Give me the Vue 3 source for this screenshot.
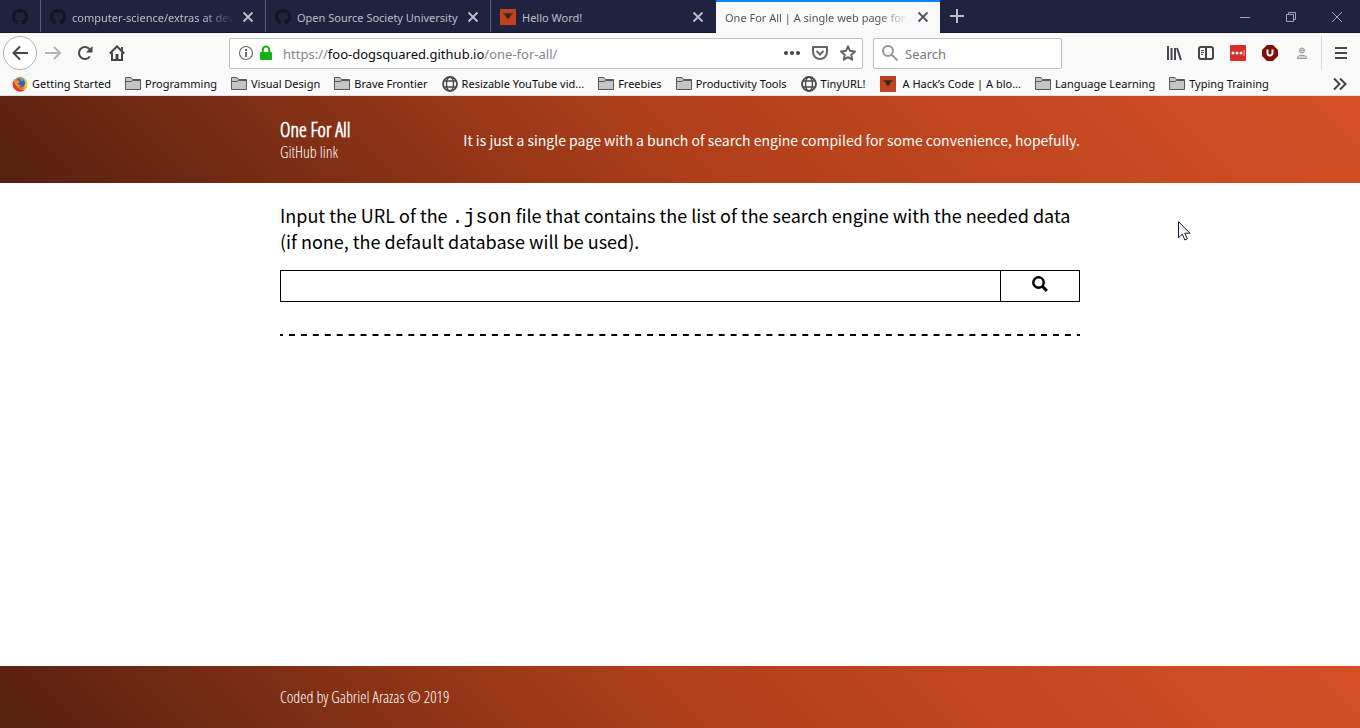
<script setup>
import { ref } from 'vue'

const tabs = [
  { title: 'computer-science/extras at dev', icon: 'github', fade: true },
  { title: 'Open Source Society University', icon: 'github' },
  { title: 'Hello Word!', icon: 'fox' },
  { title: 'One For All | A single web page for r', active: true, fade: true },
]

const bookmarks = [
  { label: 'Getting Started', icon: 'firefox' },
  { label: 'Programming', icon: 'folder' },
  { label: 'Visual Design', icon: 'folder' },
  { label: 'Brave Frontier', icon: 'folder' },
  { label: 'Resizable YouTube vid...', icon: 'globe' },
  { label: 'Freebies', icon: 'folder' },
  { label: 'Productivity Tools', icon: 'folder' },
  { label: 'TinyURL!', icon: 'globe' },
  { label: 'A Hack’s Code | A blo...', icon: 'fox' },
  { label: 'Language Learning', icon: 'folder' },
  { label: 'Typing Training', icon: 'folder' },
]

const databaseUrl = ref('')
const search = ref('')
</script>

<template>
  <div class="window">
    <svg class="defs" width="0" height="0" aria-hidden="true">
      <symbol id="github" viewBox="0 0 16 16">
        <path fill="#14141c" fill-rule="evenodd" d="M8 0C3.58 0 0 3.58 0 8c0 3.54 2.29 6.53 5.47 7.59.4.07.55-.17.55-.38 0-.19-.01-.82-.01-1.49-2.01.37-2.53-.49-2.69-.94-.09-.23-.48-.94-.82-1.13-.28-.15-.68-.52-.01-.53.63-.01 1.08.58 1.23.82.72 1.21 1.87.87 2.33.66.07-.52.28-.87.51-1.07-1.78-.2-3.64-.89-3.64-3.95 0-.87.31-1.59.82-2.15-.08-.2-.36-1.02.08-2.12 0 0 .67-.21 2.2.82.64-.18 1.32-.27 2-.27s1.36.09 2 .27c1.53-1.04 2.2-.82 2.2-.82.44 1.1.16 1.92.08 2.12.51.56.82 1.27.82 2.15 0 3.07-1.87 3.75-3.65 3.95.29.25.54.73.54 1.48 0 1.07-.01 1.93-.01 2.2 0 .21.15.46.55.38A8.01 8.01 0 0 0 16 8c0-4.42-3.58-8-8-8z" />
      </symbol>
      <symbol id="fox" viewBox="0 0 16 16">
        <path fill="#bf431d" d="M0 0h16v16H0z" />
        <path fill="#74301f" d="M3 3.500l3 .7 2-.6 2 .6 3-.7-.3 2L10.500 7H5.500L3.300 5.500z" />
        <path fill="#33262a" d="M5.500 4.500h5L10 8l-1 1.500H7L6 8z" />
      </symbol>
      <symbol id="firefox" viewBox="0 0 16 16">
        <circle cx="8" cy="8.300" r="7.300" fill="#f5761d" />
        <path fill="#ffc52e" d="M11 1.500c3 1.500 4.500 4 4.300 7-.3 3-2.300 5.500-5.300 6.500 2-2 3-4 2.500-7z" />
        <path fill="#e2313a" d="M1 5c-1 4 .5 8.500 4.500 10 2.500 1 5 .5 7-1-4 .5-7-1-8-4z" />
        <circle cx="8.500" cy="6.800" r="4.600" fill="#2463bd" />
        <path fill="#35b4ee" d="M7 2.500c2-1 4 0 5 1.500L10 5.500z" />
        <path fill="#f78a1e" d="M1.200 3l2.500 1.500L6.500 4.300 8 6 6 7.200l.5 1.600L9.500 9.500C8 11.500 5 11.500 3.500 9z" />
      </symbol>
      <symbol id="folder" viewBox="0 0 16 16">
        <path fill="#c3c6c4" stroke="#55595a" d="M.5 13.500v-12H6L7.500 3.500h8v10z" />
        <path fill="none" stroke="#55595a" d="M.5 5.500h5.500l1.500-1h8" />
      </symbol>
      <symbol id="globe" viewBox="0 0 16 16">
        <g fill="none" stroke="#4a4a4f" stroke-width="1.400">
          <circle cx="8" cy="8" r="7" stroke-width="1.800" />
          <ellipse cx="8" cy="8" rx="3.500" ry="7" />
          <path d="M2 5h12M2 11h12" />
        </g>
      </symbol>
    </svg>

    <nav class="tab-strip" aria-label="Tabs">
      <button class="pinned" aria-label="GitHub"><svg width="16" height="16"><use href="#github" /></svg></button>
      <div v-for="tab in tabs" :key="tab.title" class="tab" :class="{ active: tab.active }">
        <svg v-if="tab.icon" width="16" height="16"><use :href="'#' + tab.icon" /></svg>
        <span class="tab-title" :class="{ fade: tab.fade }">{{ tab.title }}</span>
        <button class="close" aria-label="Close tab">
          <svg width="16" height="16" viewBox="0 0 16 16"><path d="M3.500 3.500l9 9m0-9l-9 9" fill="none" stroke="currentColor" stroke-width="1.800" /></svg>
        </button>
      </div>
      <button class="new-tab" aria-label="New tab">
        <svg width="16" height="16" viewBox="0 0 16 16"><path d="M8 1v14M1 8h14" stroke="currentColor" stroke-width="2" /></svg>
      </button>
      <div class="controls">
        <button aria-label="Minimize"><svg width="10" height="10"><path d="M0 5.500h10" /></svg></button>
        <button aria-label="Restore"><svg width="10" height="10"><path d="M.5 2.500h7v7h-7zM2.500 2.500v-2h7v7h-2" /></svg></button>
        <button aria-label="Close"><svg width="10" height="10"><path d="M0 0l10 10M10 0L0 10" /></svg></button>
      </div>
    </nav>

    <div class="toolbar">
      <button class="back" aria-label="Back">
        <svg width="16" height="16" viewBox="0 0 16 16"><path d="M16 8H1.500M8 1.500L1.500 8 8 14.500" /></svg>
      </button>
      <button class="tool forward" aria-label="Forward">
        <svg width="16" height="16" viewBox="0 0 16 16"><path d="M0 8h14.500M9 2l6 6-6 6" /></svg>
      </button>
      <button class="tool" aria-label="Reload">
        <svg width="16" height="16" viewBox="0 0 16 16"><path d="M12.800 11.500A6 6 0 1 1 12.500 4" /><path class="solid" d="M15.500 1v6.500H9z" /></svg>
      </button>
      <button class="tool" aria-label="Home">
        <svg width="16" height="16" viewBox="0 0 16 16"><path d="M.8 8.500L8 1.500l7.200 7M3 7.500V15h10V7.500" /><path class="solid" d="M6.500 9h3v6h-3zM12 2h2v4l-2-2z" /></svg>
      </button>
      <span class="spacer"></span>
      <div class="field url">
        <svg class="info" width="16" height="16" viewBox="0 0 16 16"><circle cx="8" cy="8" r="6.500" fill="none" stroke="#6c6c70" stroke-width="1.200" /><path d="M7 7h2v5H7zM7 4h2v2H7z" fill="#6c6c70" /></svg>
        <svg width="16" height="16" viewBox="0 0 16 16"><path d="M4.800 8V4.800a3.200 3.200 0 0 1 6.400 0V8" fill="none" stroke="#12b212" stroke-width="2" /><rect x="2" y="7" width="12" height="8" rx="1" fill="#12b212" /></svg>
        <a class="address" href="#">https://<b>foo-dogsquared.github.io</b>/one-for-all/</a>
        <button aria-label="Page actions"><svg width="16" height="16" viewBox="0 0 16 16"><g class="solid"><circle cx="2" cy="8" r="2" /><circle cx="8" cy="8" r="2" /><circle cx="14" cy="8" r="2" /></g></svg></button>
        <button aria-label="Save to Pocket"><svg width="16" height="16" viewBox="0 0 16 16"><path d="M1 2h14v5a7 7 0 0 1-14 0z" stroke-linejoin="round" /><path d="M4.500 6L8 9.500 11.500 6" /></svg></button>
        <button aria-label="Bookmark"><svg width="16" height="16" viewBox="0 0 16 16"><path stroke-linejoin="round" d="M8 1.300l2 4.500 5 .6-3.700 3.300 1 5L8 12.200 3.700 14.700l1-5L1 6.400l5-.6z" /></svg></button>
      </div>
      <label class="field search">
        <svg width="16" height="16" viewBox="0 0 16 16"><circle cx="6" cy="6" r="5" fill="none" stroke="#96969a" stroke-width="2" /><path d="M9.500 9.500l6 6" stroke="#96969a" stroke-width="2" /></svg>
        <input v-model="search" type="text" placeholder="Search" aria-label="Search" />
      </label>
      <span class="spacer"></span>
      <button class="tool" aria-label="Library"><svg width="16" height="16" viewBox="0 0 16 16"><path d="M2 1v14M5.500 3v12M9 3v12M11 3l4 12" /></svg></button>
      <button class="tool" aria-label="Sidebars"><svg width="16" height="16" viewBox="0 0 16 16"><rect x="1" y="2" width="14" height="12" rx="2" fill="none" /><path d="M8 2v12" stroke-width="1.500" /><path class="thin" d="M3 5.500h3M3 7.500h3M3 9.500h2" /></svg></button>
      <button class="tool" aria-label="Password manager"><svg width="16" height="16" viewBox="0 0 16 16"><rect width="16" height="16" rx="1" fill="#d92d2a" stroke="none" /><g fill="#fff" stroke="none"><circle cx="3" cy="8" r="1.500" /><circle cx="7" cy="8" r="1.500" /><circle cx="11" cy="8" r="1.500" /><path d="M13.500 5h1v6h-1z" opacity=".6" /></g></svg></button>
      <button class="tool" aria-label="Content blocker"><svg width="16" height="16" viewBox="0 0 16 16"><path d="M5 0h6l5 5v6l-5 5H5l-5-5V5z" fill="#7d0f05" stroke="none" /><path d="M5.500 4.500V8a2.500 2.500 0 0 0 5 0V4.500" stroke="#fff" /></svg></button>
      <button class="tool" aria-label="Account"><svg width="16" height="16" viewBox="0 0 16 16"><g stroke="#98989c"><circle cx="8" cy="5.500" r="2.500" fill="#d6d6d8" /><path class="thin" d="M6.500 5.500h3M3.500 13.500v-1.500l2-1.500h5l2 1.500v1.500z" fill="#d6d6d8" /></g></svg></button>
      <button class="menu" aria-label="Menu"><svg width="16" height="16" viewBox="0 0 16 16"><path d="M2 3h12M2 8h12M2 13h12" /></svg></button>
    </div>

    <nav class="bookmarks" aria-label="Bookmarks">
      <a v-for="mark in bookmarks" :key="mark.label" href="#" :class="mark.icon">
        <svg width="16" height="16"><use :href="'#' + mark.icon" /></svg>
        <span>{{ mark.label }}</span>
      </a>
      <button class="more" aria-label="More bookmarks"><svg width="16" height="16" viewBox="0 0 16 16"><path d="M2 2.500L7.500 8 2 13.500M8 2.500L13.500 8 8 13.500" /></svg></button>
    </nav>

    <header class="banner">
      <div class="container banner-row">
        <div class="brand">
          <h1>One For All</h1>
          <a href="#">GitHub link</a>
        </div>
        <p>It is just a single page with a bunch of search engine compiled for some convenience, hopefully.</p>
      </div>
    </header>

    <main class="content">
      <form class="container" @submit.prevent>
        <label class="prompt" for="database">Input the URL of the <code>.json</code> file that contains the list of the search engine with the needed data (if none, the default database will be used).</label>
        <div class="entry">
          <input id="database" v-model="databaseUrl" type="text" />
          <button aria-label="Search">
            <svg width="16" height="16" viewBox="0 0 16 16"><circle cx="6.500" cy="6.500" r="5.200" fill="none" stroke="#000" stroke-width="2.500" /><path d="M10.300 10.300l4.600 4.600" stroke="#000" stroke-width="3" /></svg>
          </button>
        </div>
        <hr />
      </form>
      <svg class="pointer" width="13" height="20" viewBox="0 0 13 20" aria-hidden="true"><path d="M.5.700v16l3.800-3.500 2.600 5.800 2.500-1.100-2.600-5.700h5.200z" fill="#fff" stroke="#14142a" /></svg>
    </main>

    <footer class="banner footer">
      <div class="container">Coded by Gabriel Arazas © 2019</div>
    </footer>
  </div>
</template>

<style>
body {
  margin: 0;
}
</style>

<style scoped>
* {
  box-sizing: border-box;
}
.window {
  display: flex;
  flex-direction: column;
  min-height: 100vh;
  background: #fff;
  font: 11px/16px "Noto Sans", "Open Sans", sans-serif;
}
.defs {
  position: absolute;
}
button {
  display: flex;
  align-items: center;
  justify-content: center;
  flex: none;
  padding: 0;
  border: 0;
  background: none;
  color: inherit;
}
svg {
  display: block;
  flex: none;
}
a {
  color: inherit;
  text-decoration: none;
}
.tab-strip {
  display: flex;
  height: 33px;
  background: #202340;
  border-bottom: 1px solid #15172e;
  color: #bdbdc8;
}
.pinned {
  width: 41px;
  padding-top: 2px;
  border-right: 1px solid #5b5d72;
}
.tab {
  display: flex;
  align-items: center;
  flex: 0 1 225px;
  min-width: 0;
  gap: 6px;
  padding: 2px 9px 0;
  border-right: 1px solid #5b5d72;
}
.tab:nth-of-type(3) {
  border-right-color: transparent;
}
.tab.active {
  flex-basis: 224px;
  height: 33px;
  padding-bottom: 1px;
  border-right: 0;
  background: #f9f9fa;
  box-shadow: inset 0 2px #0a84ff;
  color: #55555f;
}
.tab-title {
  flex: 1;
  padding-top: 1px;
  overflow: hidden;
  white-space: nowrap;
}
.fade {
  mask-image: linear-gradient(to left, transparent, #000 32px);
}
.new-tab {
  width: 34px;
}
.controls {
  display: flex;
  margin-left: auto;
}
.controls button {
  width: 46px;
  padding-top: 2px;
}
.controls path {
  fill: none;
  stroke: #a5a5b0;
}
.toolbar {
  display: flex;
  align-items: center;
  height: 40px;
  padding: 0 1px 0 3px;
  background: #f9f9fa;
}
.toolbar path,
.toolbar rect,
.bookmarks .more path {
  stroke-width: 2;
}
.toolbar .thin {
  stroke-width: 1;
}
.toolbar button svg,
.more svg {
  fill: none;
  stroke: #45454a;
}
.toolbar .solid {
  fill: #45454a;
  stroke: none;
}
.back {
  width: 34px;
  height: 34px;
  border: 1px solid #b1b1b3;
  border-radius: 50%;
  background: #fff;
}
.tool {
  width: 32px;
  height: 32px;
}
.toolbar .forward svg {
  stroke: #b4b4b7;
}
.spacer {
  flex: 96 1 0;
}
.field {
  display: flex;
  align-items: center;
  min-width: 0;
  height: 31px;
  border: 1px solid #c0c0c2;
  border-radius: 2px;
  background: #fff;
  font-size: 13px;
}
.url {
  flex: 622 1 0;
  gap: 4px;
  padding: 0 2px 0 8px;
}
.address {
  flex: 1;
  margin-left: 5px;
  padding-top: 2px;
  color: #85858a;
  white-space: nowrap;
}
.address b {
  color: #0c0c0d;
  font-weight: 400;
}
.url button {
  width: 24px;
  height: 24px;
}
.toolbar .url button svg {
  stroke: #66666a;
}
.search {
  flex: 179 1 0;
  gap: 7px;
  margin-left: 10px;
  padding-left: 8px;
}
.search input {
  flex: 1;
  min-width: 0;
  padding: 2px 0 0;
  border: 0;
  outline: 0;
  background: none;
  font: inherit;
}
.search input::placeholder {
  color: #77777b;
}
.menu {
  width: 38px;
  height: 34px;
  margin-left: 3px;
  border-left: 1px solid #dcdcde;
}
.bookmarks {
  display: flex;
  align-items: center;
  gap: 14px;
  height: 23px;
  padding: 0 12px;
  border-bottom: 1px solid #e0e0e1;
  background: #f9f9fa;
  color: #0c0c0d;
  white-space: nowrap;
}
.bookmarks a {
  display: flex;
  gap: 4px;
}
.bookmarks .fox {
  gap: 7px;
}
.more {
  margin-left: auto;
}
.banner {
  background: linear-gradient(45deg, #54200f, #b03f1a 50%, #d65026);
  color: #fff;
}
.container {
  width: 100%;
  max-width: 800px;
  margin: 0 auto;
}
.banner-row {
  display: flex;
  align-items: center;
  justify-content: space-between;
  padding: 22px 0 19px;
  font: 14px/20px "Noto Sans CJK SC", sans-serif;
}
.banner-row p {
  margin: -2px 0 0;
}
.brand,
.footer {
  font: 300 16px/23px "Open Sans Condensed Light", "Open Sans Condensed", "Noto Sans CJK SC", sans-serif;
}
.brand h1 {
  margin: 0;
  font-size: 20px;
  font-weight: 700;
  line-height: 23px;
}
.content {
  position: relative;
  flex: 1;
  padding-top: 19px;
}
.prompt {
  display: block;
  font: 18px/26px "Noto Sans CJK SC", sans-serif;
}
.prompt code {
  font: 20px/1 "Liberation Mono", monospace;
}
.entry {
  display: flex;
  height: 32px;
  margin-top: 16px;
  border: 1px solid #000;
}
.entry input {
  flex: 1;
  min-width: 0;
  padding: 0 8px;
  border: 0;
  outline: 0;
  font: inherit;
}
.entry button {
  width: 79px;
  padding-bottom: 4px;
  border-left: 1px solid #000;
}
hr {
  height: 2px;
  margin: 32px 0 0;
  border: 0;
  background: linear-gradient(to right, #000 25%, transparent 25% 75%, #000 75%) 0 0 / 12px 2px round;
}
.pointer {
  position: absolute;
  top: 38px;
  left: 1178px;
}
.footer {
  padding: 20px 0 19px;
}
</style>
